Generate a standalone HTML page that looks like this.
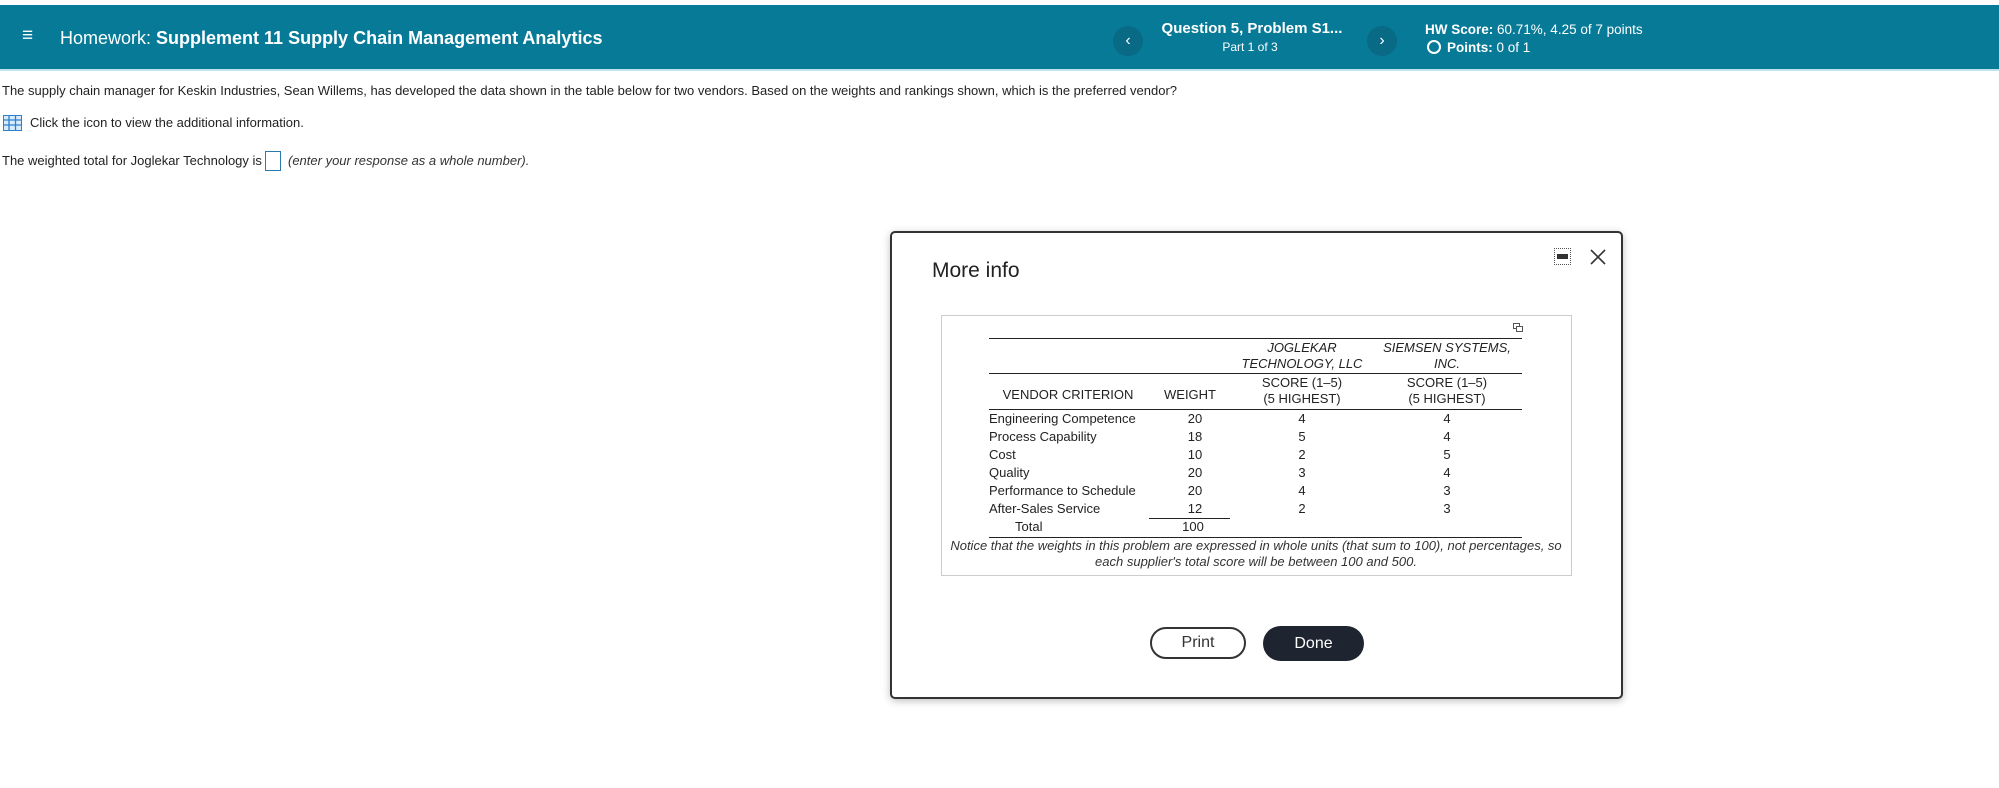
<!DOCTYPE html>
<html><head><meta charset="utf-8"><style>
*{margin:0;padding:0;box-sizing:border-box}
body{width:1999px;height:788px;background:#fff;font-family:"Liberation Sans",Arial,sans-serif;color:#222;position:relative;overflow:hidden}
.a{position:absolute;white-space:nowrap}
#hdr{position:absolute;left:0;top:5px;width:1999px;height:66px;background:#077a98;border-bottom:2px solid #bfe3ec}
.circ{position:absolute;width:30px;height:30px;border-radius:50%;background:#086a85;color:#fff;font-size:16px;text-align:center;line-height:29px}
.t{position:absolute;font-size:13px;color:#222;white-space:nowrap;line-height:16px}
.c{transform:translateX(-50%);text-align:center}
.ln{position:absolute;height:1px;background:#222}
</style></head><body>
<div id="hdr">
 <div class="a" style="left:22px;top:20px;color:#fff;font-size:19px">&#8801;</div>
 <div class="a" style="left:60px;top:23px;color:#fff;font-size:18px">Homework: <b>Supplement 11 Supply Chain Management Analytics</b></div>
 <div class="circ" style="left:1113px;top:21px">&#8249;</div>
 <div class="a c" style="left:1252px;top:15px;color:#fff;font-size:15px;font-weight:bold">Question 5, Problem S1...</div>
 <div class="a c" style="left:1250px;top:35px;color:#fff;font-size:12px">Part 1 of 3</div>
 <div class="circ" style="left:1367px;top:21px">&#8250;</div>
 <div class="a" style="left:1425px;top:17px;color:#fff;font-size:13.5px"><b>HW Score:</b> 60.71%, 4.25 of 7 points</div>
 <div class="a" style="left:1427px;top:35px;color:#fff;font-size:13.5px"><span style="display:inline-block;width:14px;height:14px;border:2px solid #fff;border-radius:50%;vertical-align:-2px;margin-right:6px"></span><b>Points:</b> 0 of 1</div>
</div>
<div class="a" style="left:2px;top:83px;font-size:13px">The supply chain manager for Keskin Industries, Sean Willems, has developed the data shown in the table below for two vendors. Based on the weights and rankings shown, which is the preferred vendor?</div>
<svg class="a" style="left:3px;top:115px" width="19" height="16" viewBox="0 0 19 16"><rect x="0.5" y="0.5" width="18" height="15" fill="#d9ecfa" stroke="#2d7fd2"/><path d="M0 5H19M0 10H19M6 0V16M12.5 0V16" stroke="#2d7fd2" stroke-width="1.3"/></svg>
<div class="a" style="left:30px;top:115px;font-size:13px">Click the icon to view the additional information.</div>
<div class="a" style="left:2px;top:153px;font-size:13px">The weighted total for Joglekar Technology is</div>
<div class="a" style="left:265px;top:151px;width:16px;height:20px;border:1px solid #2a7ab0"></div>
<div class="a" style="left:288px;top:153px;font-size:13px;font-style:italic;color:#333">(enter your response as a whole number).</div>

<div class="a" style="left:890px;top:231px;width:733px;height:468px;border:2px solid #333;border-radius:5px;box-shadow:0 2px 8px rgba(0,0,0,.25);background:#fff"></div>
<div class="a" style="left:932px;top:259px;font-size:21px;color:#222">More info</div>
<div class="a" style="left:1554px;top:248px;width:17px;height:17px;border:1px dotted #555"></div>
<div class="a" style="left:1557px;top:254px;width:11px;height:5px;background:#333"></div>
<svg class="a" style="left:1590px;top:249px" width="16" height="16"><path d="M1 1L15 15M15 1L1 15" stroke="#333" stroke-width="1.6"/></svg>

<div class="a" style="left:941px;top:315px;width:631px;height:261px;border:1px solid #ccc"></div>
<svg class="a" style="left:1513px;top:323px" width="10" height="10"><rect x="0.5" y="0.5" width="6" height="5" fill="none" stroke="#555"/><rect x="3.5" y="3.5" width="6" height="5" fill="#fff" stroke="#555"/></svg>
<div class="ln" style="left:989px;top:338px;width:533px"></div>
<div class="t c" style="left:1302px;top:340px;font-style:italic">JOGLEKAR<br>TECHNOLOGY, LLC</div>
<div class="t c" style="left:1447px;top:340px;font-style:italic">SIEMSEN SYSTEMS,<br>INC.</div>
<div class="ln" style="left:989px;top:373px;width:533px"></div>
<div class="t c" style="left:1302px;top:375px">SCORE (1–5)<br>(5 HIGHEST)</div>
<div class="t c" style="left:1447px;top:375px">SCORE (1–5)<br>(5 HIGHEST)</div>
<div class="t c" style="left:1068px;top:387px">VENDOR CRITERION</div>
<div class="t c" style="left:1190px;top:387px">WEIGHT</div>
<div class="ln" style="left:989px;top:409px;width:533px"></div>
<div class="t" style="left:989px;top:410px;line-height:17.9px">Engineering Competence<br>Process Capability<br>Cost<br>Quality<br>Performance to Schedule<br>After-Sales Service</div>
<div class="t c" style="left:1195px;top:410px;line-height:17.9px">20<br>18<br>10<br>20<br>20<br>12</div>
<div class="t c" style="left:1302px;top:410px;line-height:17.9px">4<br>5<br>2<br>3<br>4<br>2</div>
<div class="t c" style="left:1447px;top:410px;line-height:17.9px">4<br>4<br>5<br>4<br>3<br>3</div>
<div class="ln" style="left:1149px;top:518px;width:81px"></div>
<div class="t" style="left:1015px;top:519px">Total</div>
<div class="t c" style="left:1193px;top:519px">100</div>
<div class="ln" style="left:989px;top:537px;width:533px"></div>
<div class="t c" style="left:1256px;top:538px;font-style:italic;color:#333">Notice that the weights in this problem are expressed in whole units (that sum to 100), not percentages, so<br>each supplier's total score will be between 100 and 500.</div>

<div class="a" style="left:1150px;top:627px;width:96px;height:32px;border:2px solid #333;border-radius:16px;text-align:center;line-height:28px;font-size:16px;color:#333">Print</div>
<div class="a" style="left:1263px;top:626px;width:101px;height:35px;background:#1e2430;border-radius:18px;text-align:center;line-height:35px;font-size:16px;color:#fff">Done</div>
</body></html>
